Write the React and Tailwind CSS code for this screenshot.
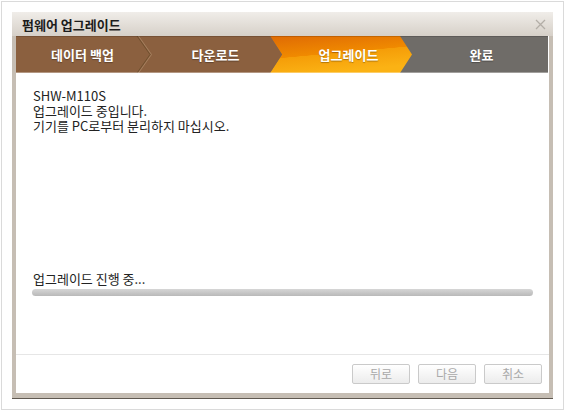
export default function App() {
  const steps = ["데이터 백업", "다운로드", "업그레이드", "완료"];

  return (
    <div className="w-[565px] h-[411px] bg-white p-px font-['Noto_Sans_CJK_KR','Noto_Sans',sans-serif]">
      <div className="h-full border border-[#dadada] p-[10px]">
        {/* Dialog */}
        <div className="h-full flex flex-col bg-[#c6beb4] border-b border-[#5f5850]">
          {/* Title bar */}
          <div className="h-[24px] shrink-0 flex items-center justify-between pl-[10px] pr-[7px] bg-gradient-to-b from-[#f0ede9] to-[#d6d0c8]">
            <span className="text-[13px] leading-none font-bold text-[#1c1c1c]">
              펌웨어 업그레이드
            </span>
            <svg width="11" height="11" viewBox="0 0 11 11">
              <path d="M1 1 L10 10 M10 1 L1 10" stroke="#b3aea7" strokeWidth="1.3" />
            </svg>
          </div>

          {/* Content */}
          <div className="flex-1 mx-[4px] mb-[5px] bg-white flex flex-col">
            {/* Step bar */}
            <div className="relative h-[37px] shrink-0">
              <svg className="absolute inset-0" width="532" height="37" viewBox="0 0 532 37">
                <defs>
                  <linearGradient id="org" x1="0" y1="0" x2="0.35" y2="1">
                    <stop offset="0" stopColor="#df6a04" />
                    <stop offset="0.55" stopColor="#f08a00" />
                    <stop offset="0.56" stopColor="#f59d08" />
                    <stop offset="1" stopColor="#fbb214" />
                  </linearGradient>
                </defs>
                <rect x="0" y="0" width="532" height="37" fill="#6f6c68" />
                <polygon points="254,0 384,0 396,18.5 384,37 254,37 266,18.5" fill="url(#org)" />
                <polygon points="0,0 254,0 266,18.5 254,37 0,37" fill="#8b603f" />
                <polyline points="121,0 134,18.5 121,37" fill="none" stroke="#70502f" strokeWidth="1" />
                <polyline points="122.5,0 135.5,18.5 122.5,37" fill="none" stroke="#a6805f" strokeWidth="1" />
                <rect x="0" y="0" width="532" height="1" fill="#000" opacity="0.15" />
                <rect x="0" y="36" width="532" height="1" fill="#fff" opacity="0.35" />
              </svg>
              <div className="relative h-full flex">
                {steps.map((s) => (
                  <div
                    key={s}
                    className="w-[133px] flex items-center justify-center text-white text-[13px] font-bold leading-none [text-shadow:0_1px_1px_rgba(0,0,0,0.3)]"
                  >
                    {s}
                  </div>
                ))}
              </div>
            </div>

            {/* Message */}
            <div className="pt-[15px] pl-[17px] text-[13px] leading-[15px] text-[#222]">
              <p>SHW-M110S</p>
              <p>업그레이드 중입니다.</p>
              <p>기기를 PC로부터 분리하지 마십시오.</p>
            </div>

            <div className="flex-1" />

            {/* Progress */}
            <div className="px-[16px]">
              <p className="pl-px text-[13px] leading-[15px] text-[#222]">업그레이드 진행 중...</p>
              <div className="mt-[3px] h-[7px] rounded-full bg-gradient-to-b from-[#d6d6d6] to-[#b9b9b9]" />
            </div>

            <div className="mt-[58px] h-px bg-[#e6e6e6]" />

            {/* Buttons */}
            <div className="pt-[9px] pb-[9px] pr-[7px] flex justify-end gap-[8px]">
              {["뒤로", "다음", "취소"].map((b) => (
                <button
                  key={b}
                  disabled
                  className="w-[58px] h-[20px] rounded-[2px] border border-[#cacaca] bg-gradient-to-b from-white to-[#ececec] text-[12px] leading-none text-[#a9a9a9]"
                >
                  {b}
                </button>
              ))}
            </div>
          </div>
        </div>
      </div>
    </div>
  );
}
